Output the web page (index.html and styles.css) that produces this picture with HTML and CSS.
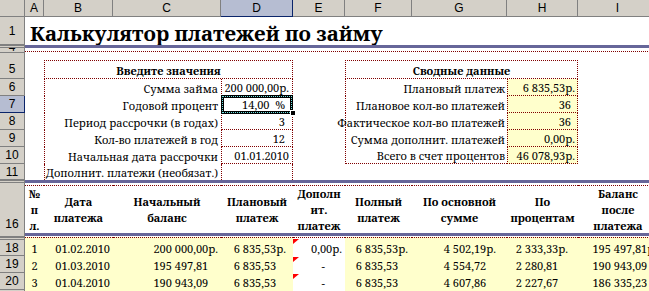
FILE: index.html
```html
<!DOCTYPE html>
<html lang="ru">
  <head>
    <meta charset="UTF-8" />
    <title>Калькулятор платежей по займу</title>
    <link rel="stylesheet" href="styles.css">
  </head>
  <body>
    <div class="sheet">
      <!-- column letters -->
      <div class="row colhdr">
        <div class="rh"></div>
        <div class="cells">
          <div class="ch w-a">A</div>
          <div class="ch w-b">B</div>
          <div class="ch w-c">C</div>
          <div class="ch w-d sel">D</div>
          <div class="ch w-e">E</div>
          <div class="ch w-f">F</div>
          <div class="ch w-g">G</div>
          <div class="ch w-h">H</div>
          <div class="ch w-i">I</div>
        </div>
      </div>

      <div class="row r1">
        <div class="rh">1</div>
        <div class="cells">
          <h1 class="title">Калькулятор платежей по займу</h1>
        </div>
      </div>

      <div class="row r4">
        <div class="rh gap tiny">4</div>
        <div class="cells rule"><div class="dots"></div></div>
      </div>

      <!-- input / summary boxes -->
      <div class="row r5">
        <div class="rh low2">5</div>
        <div class="cells">
          <div class="cell w-a"></div>
          <div class="cell w-bd box-head">Введите значения</div>
          <div class="cell w-e"></div>
          <div class="cell w-fh box-head">Сводные данные</div>
        </div>
      </div>

      <div class="row">
        <div class="rh">6</div>
        <div class="cells">
          <div class="cell w-a"></div>
          <div class="cell w-bc label">Сумма займа</div>
          <div class="cell w-d input">200 000,00р.</div>
          <div class="cell w-e"></div>
          <div class="cell w-fg label right">Плановый платеж</div>
          <div class="cell w-h input result">6 835,53р.</div>
        </div>
      </div>

      <div class="row">
        <div class="rh sel">7</div>
        <div class="cells">
          <div class="cell w-a"></div>
          <div class="cell w-bc label">Годовой процент</div>
          <div class="cell w-d input short cur">14,00&nbsp; %<span class="handle"></span></div>
          <div class="cell w-e"></div>
          <div class="cell w-fg label right">Плановое кол-во платежей</div>
          <div class="cell w-h input result short">36</div>
        </div>
      </div>

      <div class="row">
        <div class="rh">8</div>
        <div class="cells">
          <div class="cell w-a"></div>
          <div class="cell w-bc label">Период рассрочки (в годах)</div>
          <div class="cell w-d input short">3</div>
          <div class="cell w-e"></div>
          <div class="cell w-fg label right">Фактическое кол-во платежей</div>
          <div class="cell w-h input result short">36</div>
        </div>
      </div>

      <div class="row">
        <div class="rh">9</div>
        <div class="cells">
          <div class="cell w-a"></div>
          <div class="cell w-bc label">Кол-во платежей в год</div>
          <div class="cell w-d input short">12</div>
          <div class="cell w-e"></div>
          <div class="cell w-fg label right">Сумма дополнит. платежей</div>
          <div class="cell w-h input result">0,00р.</div>
        </div>
      </div>

      <div class="row">
        <div class="rh">10</div>
        <div class="cells">
          <div class="cell w-a"></div>
          <div class="cell w-bc label">Начальная дата рассрочки</div>
          <div class="cell w-d input">01.01.2010</div>
          <div class="cell w-e"></div>
          <div class="cell w-fg label right last">Всего в счет процентов</div>
          <div class="cell w-h input result">46 078,93р.</div>
        </div>
      </div>

      <div class="row r11">
        <div class="rh">11</div>
        <div class="cells">
          <div class="cell w-a"></div>
          <div class="cell w-bc label">Дополнит. платежи (необязат.)</div>
          <div class="cell w-d input open"></div>
        </div>
      </div>

      <!-- schedule table -->
      <div class="row r16">
        <div class="rh gap low">16</div>
        <div class="cells head">
          <div class="cell th w-a"><span>№<br>п<br>л.</span></div>
          <div class="cell th w-b"><span>Дата<br>платежа</span></div>
          <div class="cell th w-c"><span>Начальный<br>баланс</span></div>
          <div class="cell th w-d"><span>Плановый<br>платеж</span></div>
          <div class="cell th w-e"><span>Дополн<br>ит.<br>платеж</span></div>
          <div class="cell th w-f"><span>Полный<br>платеж</span></div>
          <div class="cell th w-g"><span>По основной<br>сумме</span></div>
          <div class="cell th w-h"><span>По<br>процентам</span></div>
          <div class="cell th w-i"><span>Баланс<br>после<br>платежа</span></div>
        </div>
      </div>

      <div class="row r18">
        <div class="rh gap">18</div>
        <div class="cells data first">
          <div class="cell w-a idx">1</div>
          <div class="cell w-b num">01.02.2010</div>
          <div class="cell w-c num">200 000,00р.</div>
          <div class="cell w-d num">6 835,53р.</div>
          <div class="cell w-e num extra"><span class="note"></span>0,00р.</div>
          <div class="cell w-f num">6 835,53р.</div>
          <div class="cell w-g num">4 502,19р.</div>
          <div class="cell w-h num">2 333,33р.</div>
          <div class="cell w-i num">195 497,81р.</div>
        </div>
      </div>

      <div class="row">
        <div class="rh">19</div>
        <div class="cells data">
          <div class="cell w-a idx">2</div>
          <div class="cell w-b num">01.03.2010</div>
          <div class="cell w-c num">195 497,81<span class="ghost">р.</span></div>
          <div class="cell w-d num">6 835,53<span class="ghost">р.</span></div>
          <div class="cell w-e num extra dash"><span class="note"></span>-</div>
          <div class="cell w-f num">6 835,53<span class="ghost">р.</span></div>
          <div class="cell w-g num">4 554,72<span class="ghost">р.</span></div>
          <div class="cell w-h num">2 280,81<span class="ghost">р.</span></div>
          <div class="cell w-i num">190 943,09<span class="ghost">р.</span></div>
        </div>
      </div>

      <div class="row">
        <div class="rh">20</div>
        <div class="cells data">
          <div class="cell w-a idx">3</div>
          <div class="cell w-b num">01.04.2010</div>
          <div class="cell w-c num">190 943,09<span class="ghost">р.</span></div>
          <div class="cell w-d num">6 835,53<span class="ghost">р.</span></div>
          <div class="cell w-e num extra dash"><span class="note"></span>-</div>
          <div class="cell w-f num">6 835,53<span class="ghost">р.</span></div>
          <div class="cell w-g num">4 607,86<span class="ghost">р.</span></div>
          <div class="cell w-h num">2 227,67<span class="ghost">р.</span></div>
          <div class="cell w-i num">186 335,23<span class="ghost">р.</span></div>
        </div>
      </div>

      <div class="row">
        <div class="rh"></div>
        <div class="cells data">
          <div class="cell w-a"></div>
          <div class="cell w-b"></div>
          <div class="cell w-c"></div>
          <div class="cell w-d"></div>
          <div class="cell w-e extra"></div>
          <div class="cell w-f"></div>
          <div class="cell w-g"></div>
          <div class="cell w-h"></div>
          <div class="cell w-i"></div>
        </div>
      </div>
    </div>
  </body>
</html>
```

FILE: styles.css
```css
* {
  margin: 0;
  padding: 0;
  box-sizing: border-box;
}

body,
html {
  width: 100%;
  height: 100%;
  overflow: hidden;
  background: #fff;
}

body {
  font-family: "Noto Serif", "DejaVu Serif", serif;
  font-size: 11px;
  color: #000;
}

.sheet {
  width: 658px;
}

/* rows */
.row {
  display: flex;
  height: 17px;
}

.r1 {
  height: 28px;
}

.r4 {
  height: 8px;
}

.r5 {
  height: 26px;
}

.r11 {
  height: 16px;
}

.r16 {
  height: 57px;
}

.r18 {
  height: 19px;
}

/* row numbers */
.rh {
  flex: none;
  width: 25px;
  display: flex;
  align-items: center;
  justify-content: center;
  background: #d4d0c8;
  border-right: 1px solid #808080;
  border-bottom: 1px solid #808080;
  font-family: "Liberation Sans", Arial, sans-serif;
  font-size: 12px;
  overflow: hidden;
}

.rh.gap {
  border-top: 3px double #808080;
}

.rh.tiny {
  align-items: flex-end;
  line-height: 10px;
}

.rh.low {
  align-items: flex-end;
  padding-bottom: 5px;
}

.rh.low2 {
  align-items: flex-end;
  padding-bottom: 2px;
}

.rh.sel {
  background: #b6bdd2;
  border-right-color: #0a246a;
  border-bottom-color: #0a246a;
}

.cells {
  flex: none;
  width: 633px;
  display: flex;
}

/* column letters */
.ch {
  flex: none;
  display: flex;
  align-items: center;
  justify-content: center;
  background: #d4d0c8;
  border-right: 1px solid #808080;
  border-bottom: 1px solid #808080;
  font-family: "Liberation Sans", Arial, sans-serif;
  font-size: 12px;
}

.ch.sel {
  background: #b6bdd2;
  border-right-color: #0a246a;
  border-bottom-color: #0a246a;
}

/* column widths */
.w-a { width: 19px; }
.w-b { width: 69px; }
.w-c { width: 108px; }
.w-d { width: 72px; }
.w-e { width: 52px; }
.w-f { width: 67px; }
.w-g { width: 95px; }
.w-h { width: 71px; }
.w-i { width: 80px; }
.w-bc { width: 177px; }
.w-bd { width: 249px; }
.w-fg { width: 162px; }
.w-fh { width: 233px; }

.cell {
  flex: none;
  display: flex;
  align-items: flex-end;
  line-height: 14px;
  white-space: nowrap;
  overflow: hidden;
}

/* title */
.r1 .cells {
  align-items: flex-end;
}

.title {
  padding-left: 5px;
  font-size: 20.5px;
  line-height: 24px;
  font-weight: bold;
  white-space: nowrap;
}

.rule {
  flex-direction: column;
  border-top: 3px solid #666699;
}

.dots {
  margin-top: 3px;
  border-top: 1px dotted #800000;
}

/* boxes */
.box-head {
  margin-top: 7px;
  justify-content: center;
  border: 1px dotted #800000;
  font-weight: bold;
}

.label {
  justify-content: flex-end;
  padding-right: 3px;
  border-left: 1px dotted #800000;
  overflow: visible;
}

.label.right {
  padding-right: 2px;
}

.label.last {
  border-bottom: 1px dotted #800000;
}

.input {
  justify-content: flex-end;
  padding-right: 3px;
  border-left: 1px dotted #800000;
  border-right: 1px dotted #800000;
  border-bottom: 1px dotted #800000;
}

.input.short {
  padding-right: 7px;
}

.input.open {
  border-bottom: none;
}

.result {
  background: #ffffcc;
  padding-right: 2px;
}

.result.short {
  padding-right: 6px;
}

/* selected cell */
.cur {
  position: relative;
  overflow: visible;
}

.cur::before {
  content: "";
  position: absolute;
  left: -1px;
  top: -1px;
  right: -1px;
  bottom: -2px;
  border: 3px solid #000;
}

.cur::after {
  content: "";
  position: absolute;
  left: 0;
  top: 0;
  right: 0;
  bottom: -1px;
  border: 1px dotted #6fe3e3;
}

.handle {
  position: absolute;
  right: -4px;
  bottom: -4px;
  width: 6px;
  height: 6px;
  background: #000;
  border: 1px solid #fff;
  z-index: 1;
}

/* schedule header */
.head {
  border-top: 3px solid #666699;
  border-bottom: 3px solid #666699;
  margin-bottom: 1px;
}

.th {
  margin-top: 2px;
  align-items: center;
  justify-content: center;
  border-top: 1px dotted #800000;
  font-weight: bold;
  line-height: 16px;
  text-align: center;
}

/* schedule rows */
.data {
  background: #ffffcc;
}

.data.first .cell {
  border-top: 1px dotted #800000;
}

.idx {
  justify-content: center;
}

.num {
  justify-content: flex-end;
  padding-right: 3px;
}

.num.w-d { padding-right: 7px; }
.num.w-f { padding-right: 4px; }
.num.w-g { padding-right: 11px; }
.num.w-h { padding-right: 10px; }
.num.w-i { padding-right: 1px; }

.extra {
  position: relative;
  background: #fff;
}

.dash {
  padding-right: 20px;
}

.ghost {
  visibility: hidden;
}

.note {
  position: absolute;
  top: 1px;
  left: 0;
  width: 0;
  height: 0;
  border-top: 5px solid #f00;
  border-right: 6px solid transparent;
}
```
